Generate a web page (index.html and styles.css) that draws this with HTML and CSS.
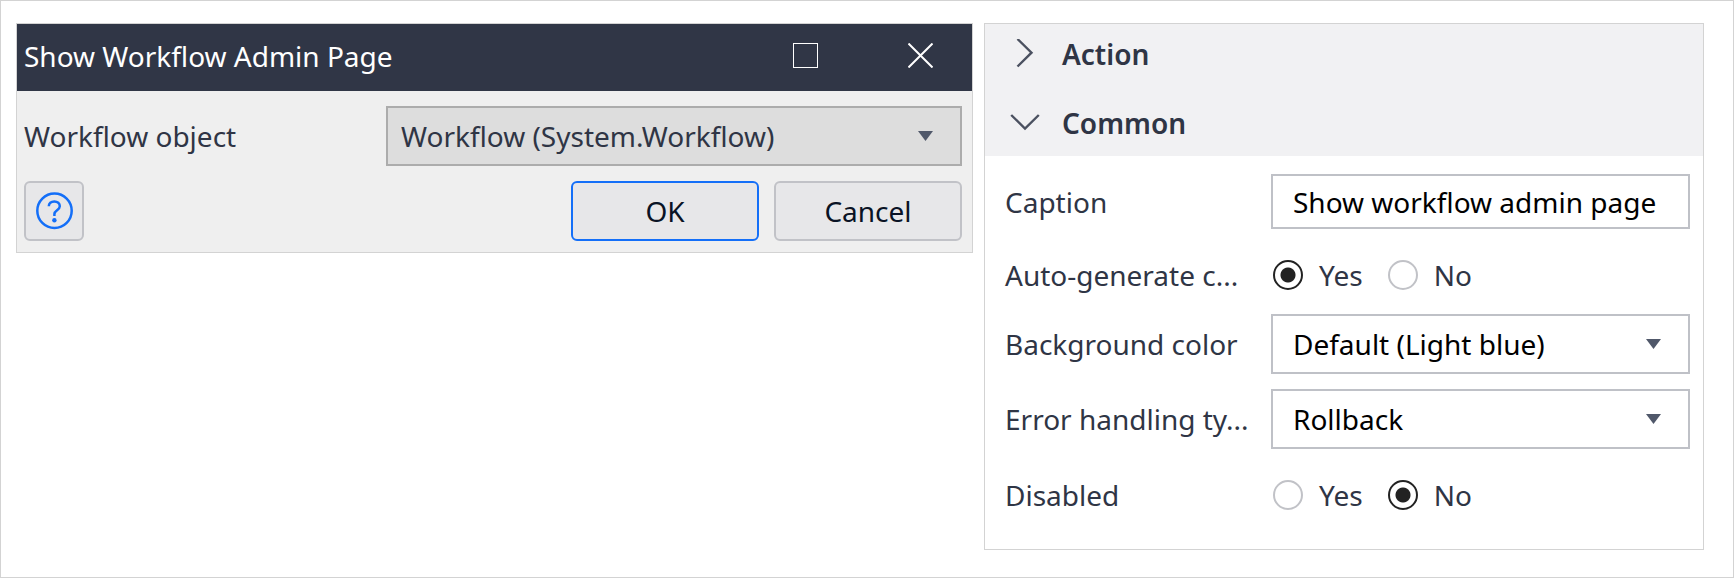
FILE: index.html
```html
<!DOCTYPE html>
<html lang="en">
<head>
<meta charset="utf-8">
<title>Show Workflow Admin Page</title>
<link rel="stylesheet" href="styles.css">
</head>
<body>
<main class="canvas">
  <section class="dialog" aria-labelledby="dialog-title">
    <header class="titlebar">
      <h1 class="title" id="dialog-title">Show Workflow Admin Page</h1>
      <button class="window-button" type="button" aria-label="Maximize">
        <svg width="25" height="25" viewBox="0 0 25 25"><rect x="0.5" y="0.5" width="24" height="24"/></svg>
      </button>
      <button class="window-button" type="button" aria-label="Close">
        <svg class="close-icon" width="25" height="25" viewBox="0 0 25 25"><path d="M0.5 0.5 24.5 24.5M24.5 0.5 0.5 24.5"/></svg>
      </button>
    </header>
    <form class="dialog-body">
      <div class="object-row">
        <label class="label" for="object">Workflow object</label>
        <div class="select">
          <select class="field field-muted" id="object"><option>Workflow (System.Workflow)</option></select>
          <svg class="arrow" width="15" height="10" viewBox="0 0 15 10"><path d="M0 0H15L7.5 10Z"/></svg>
        </div>
      </div>
      <div class="actions">
        <button class="button help" type="button" aria-label="Help">
          <svg width="38" height="38" viewBox="0 0 38 38"><circle cx="19.5" cy="18.7" r="17.2"/><path d="M13.8 14.3C13.8 11.3 16.1 9.4 19.3 9.4C22.5 9.4 24.8 11.5 24.8 14.2C24.8 18 19.4 18.3 19.4 21.9V24"/><circle class="dot" cx="19.4" cy="28.2" r="2.2"/></svg>
        </button>
        <button class="button primary" type="button">OK</button>
        <button class="button" type="button">Cancel</button>
      </div>
    </form>
  </section>

  <section class="properties" aria-label="Properties">
    <div class="groups">
      <button class="group" type="button" aria-expanded="false">
        <svg width="30" height="30" viewBox="0 0 30 30"><path d="M7.5 0 21.5 13.7 7.5 27.5"/></svg>
        Action
      </button>
      <button class="group" type="button" aria-expanded="true">
        <svg width="30" height="30" viewBox="0 0 30 30"><path d="M1.2 7 15 20.5 28.8 7"/></svg>
        Common
      </button>
    </div>
    <form class="property-list">
      <div class="property">
        <label class="label" for="caption">Caption</label>
        <input class="field field-text" id="caption" type="text" value="Show workflow admin page">
      </div>
      <div class="property property-auto" role="radiogroup" aria-labelledby="auto-label">
        <span class="label" id="auto-label">Auto-generate c...</span>
        <div class="choices">
          <label class="choice"><input class="radio" type="radio" name="auto" checked>Yes</label>
          <label class="choice"><input class="radio" type="radio" name="auto">No</label>
        </div>
      </div>
      <div class="property">
        <label class="label" for="background">Background color</label>
        <div class="select">
          <select class="field" id="background"><option>Default (Light blue)</option></select>
          <svg class="arrow" width="15" height="10" viewBox="0 0 15 10"><path d="M0 0H15L7.5 10Z"/></svg>
        </div>
      </div>
      <div class="property">
        <label class="label" for="errors">Error handling ty...</label>
        <div class="select">
          <select class="field" id="errors"><option>Rollback</option></select>
          <svg class="arrow" width="15" height="10" viewBox="0 0 15 10"><path d="M0 0H15L7.5 10Z"/></svg>
        </div>
      </div>
      <div class="property property-disabled" role="radiogroup" aria-labelledby="disabled-label">
        <span class="label" id="disabled-label">Disabled</span>
        <div class="choices">
          <label class="choice"><input class="radio" type="radio" name="disabled">Yes</label>
          <label class="choice"><input class="radio" type="radio" name="disabled" checked>No</label>
        </div>
      </div>
    </form>
  </section>
</main>
</body>
</html>
```
FILE: styles.css
```css
* { box-sizing: border-box; }

body {
  margin: 0;
  background: #fff;
  color: #2f3545;
  font: 28px/40px "Noto Sans", "Open Sans", sans-serif;
}

button, input, select { font: inherit; color: inherit; margin: 0; }

.canvas {
  display: grid;
  grid-template-columns: 957fr 720fr;
  gap: 11px;
  align-items: start;
  min-height: 100vh;
  padding: 22px 29px 27px 15px;
  border: 1px solid #d3d3d3;
}

.dialog, .properties { border: 1px solid #d3d3d3; }
.dialog { background: #efefef; }

.titlebar {
  display: flex;
  align-items: center;
  gap: 90px;
  height: 67px;
  padding: 0 39px 4px 7px;
  background: #303646;
  color: #fff;
}
.title { flex: 1; margin: 0; font-size: 28px; font-weight: 400; white-space: nowrap; }
.window-button { display: flex; padding: 0; border: 0; background: none; }
.window-button svg { fill: none; stroke: #fff; stroke-width: 1; }
.window-button .close-icon { stroke-width: 2; }

.dialog-body { display: grid; gap: 15px; padding: 15px 10px 11px 7px; }
.object-row { display: grid; grid-template-columns: 362px 1fr; align-items: center; }
.label { white-space: nowrap; }

.field {
  width: 100%;
  min-width: 0;
  height: 60px;
  padding: 0 20px;
  border: 2px solid #bfc1c7;
  border-radius: 0;
  background: #fff;
  color: #000;
  appearance: none;
}
.field-text { height: 55px; }
.field-muted { padding: 0 13px; border-color: #acacac; background: #ddd; color: #2f3545; }

.select { display: grid; align-items: center; }
.select > * { grid-area: 1 / 1; }
.arrow { justify-self: end; margin-right: 29px; fill: #50586a; pointer-events: none; }

.actions { display: flex; gap: 15px; }
.button {
  display: flex;
  align-items: center;
  justify-content: center;
  width: 188px;
  height: 60px;
  padding: 0;
  border: 2px solid #c1c2c7;
  border-radius: 6px;
  background: #e7e7e9;
  color: #0a1325;
}
.primary { border-color: #146ff8; }
.help { width: 60px; margin-right: auto; }
.help svg { fill: none; stroke: #146ff8; stroke-width: 2.5; }
.help .dot { fill: #146ff8; stroke: none; }

.groups { display: grid; gap: 9px; padding-bottom: 3px; background: #f1f1f3; }
.group {
  display: flex;
  align-items: center;
  gap: 22px;
  height: 60px;
  padding: 0 25px;
  border: 0;
  background: none;
  font-weight: 600;
}
.group svg { fill: none; stroke: #4b5160; stroke-width: 2.4; }

.property-list { display: grid; gap: 15px; padding: 18px 13px 23px 20px; }
.property { display: grid; grid-template-columns: 266px 1fr; align-items: center; }
.property-auto { height: 55px; padding-top: 6px; }
.property-disabled { height: 62px; }
.choices { display: flex; gap: 25px; padding-left: 2px; }
.choice { display: flex; align-items: center; gap: 16px; }

.radio {
  width: 30px;
  height: 30px;
  border: 2px solid #c1c2c7;
  border-radius: 50%;
  background: #fff;
  appearance: none;
}
.radio:checked {
  border-color: #222;
  background: radial-gradient(circle, #222 7px, #fff 8px);
}
```
